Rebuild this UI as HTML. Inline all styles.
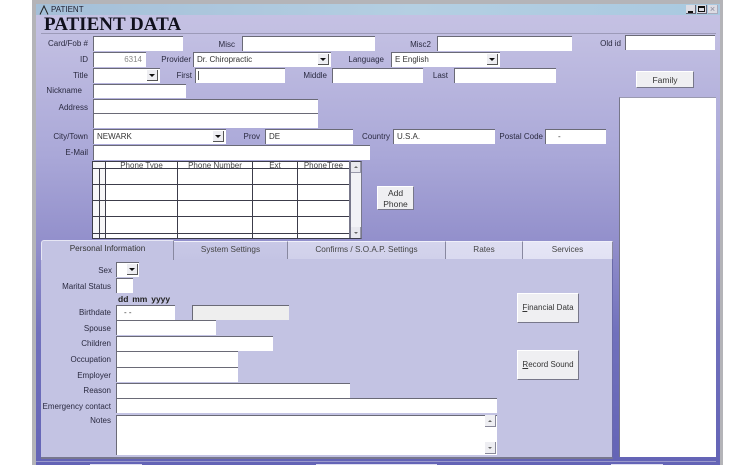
<!DOCTYPE html>
<html>
<head>
<meta charset="utf-8">
<style>
html,body{margin:0;padding:0;background:#fff;}
#p{position:relative;width:755px;height:465px;overflow:hidden;background:#fff;font-family:"Liberation Sans",sans-serif;font-size:8px;color:#2a2a40;filter:blur(.3px);}
#p div{position:absolute;box-sizing:border-box;}
.i{background:#fff;border-top:1px solid #6a6a76;border-left:1px solid #6a6a76;font-size:8px;color:#333;padding:0 0 0 3px;line-height:13px;white-space:nowrap;}
.l{text-align:right;white-space:nowrap;line-height:11px;height:11px;font-size:8px;}
.a{width:11px;height:11px;top:1px;right:2px;background:#eeeef2;border-right:1px solid #555;border-bottom:1px solid #555;}
.a:after{content:"";position:absolute;left:2px;top:4px;border-left:3px solid transparent;border-right:3px solid transparent;border-top:3px solid #111;}
.b{background:#efeff2;border-right:1px solid #77778a;border-bottom:1px solid #77778a;border-top:1px solid #fff;border-left:1px solid #fff;text-align:center;color:#333;font-size:8px;}
.t{border-right:1px solid #8888a0;border-top:1px solid #f0f0fa;font-size:8.2px;text-align:center;color:#444;line-height:16px;height:18px;top:241px;}
.h{background:#3c3c4a;height:1px;left:92px;width:258px;}
.v{background:#3c3c4a;width:1px;top:161px;height:77px;}
.c{top:161px;height:8px;line-height:9px;text-align:center;font-size:8px;color:#444;overflow:hidden;}
</style>
</head>
<body>
<div id="p">
<div style="left:32px;top:0;width:691px;height:465px;background:#b4b4b8;"></div>
<div style="left:36px;top:4px;width:684px;height:461px;background:linear-gradient(#c6c2e4 0px,#c2bfe2 30px,#aaa8d8 150px,#908dca 245px,#7070bc 330px,#6464b6 461px);"></div>
<div style="left:36px;top:4px;width:684px;height:11px;background:linear-gradient(90deg,#a4bfd8,#b4cfe2 55%,#a9c9e0);"></div>
<svg style="position:absolute;left:39px;top:5px" width="10" height="10"><path d="M1 9.5 L5 1 L9 9.5" fill="none" stroke="#222" stroke-width="1"/></svg>
<div style="left:51px;top:5px;font-size:8px;line-height:10px;color:#223;">PATIENT</div>
<div style="left:686px;top:5px;width:10px;height:9px;background:#dcdce4;border-right:1px solid #667;border-bottom:1px solid #667;"><div style="left:2px;top:6px;width:5px;height:2px;background:#111;"></div></div>
<div style="left:697px;top:5px;width:10px;height:9px;background:#dcdce4;border-right:1px solid #667;border-bottom:1px solid #667;"><div style="left:1px;top:1px;width:7px;height:6px;border:1px solid #111;border-top-width:2px;"></div></div>
<div style="left:708px;top:5px;width:10px;height:9px;background:#dcdce4;border-right:1px solid #aab;border-bottom:1px solid #aab;color:#889;font-size:9px;line-height:8px;text-align:center;">×</div>
<div style="left:44px;top:15px;font-family:'Liberation Serif',serif;font-weight:bold;font-size:19px;line-height:20px;color:#10101c;white-space:nowrap;">PATIENT DATA</div>
<div style="left:41px;top:33px;width:675px;height:1px;background:#9c9ab8;"></div>

<div class="l" style="left:30px;width:58px;top:38px;">Card/Fob #</div>
<div class="i" style="left:93px;top:36px;width:90px;height:15px;"></div>
<div class="l" style="left:200px;width:35px;top:39px;">Misc</div>
<div class="i" style="left:242px;top:36px;width:133px;height:15px;"></div>
<div class="l" style="left:400px;width:31px;top:39px;">Misc2</div>
<div class="i" style="left:437px;top:36px;width:135px;height:15px;"></div>
<div class="l" style="left:580px;width:41px;top:38px;">Old id</div>
<div class="i" style="left:625px;top:35px;width:90px;height:15px;"></div>

<div class="l" style="left:50px;width:38px;top:54px;">ID</div>
<div class="i" style="left:93px;top:52px;width:53px;height:15px;text-align:right;padding-right:4px;color:#888;">6314</div>
<div class="l" style="left:150px;width:41px;top:54px;">Provider</div>
<div class="i" style="left:193px;top:52px;width:138px;height:15px;">Dr. Chiropractic<div class="a"></div></div>
<div class="l" style="left:340px;width:44px;top:54px;">Language</div>
<div class="i" style="left:391px;top:52px;width:109px;height:15px;">E English<div class="a"></div></div>

<div class="l" style="left:50px;width:38px;top:70px;">Title</div>
<div class="i" style="left:93px;top:68px;width:67px;height:15px;"><div class="a"></div></div>
<div class="l" style="left:160px;width:32px;top:70px;">First</div>
<div class="i" style="left:195px;top:68px;width:90px;height:15px;"><div style="left:2px;top:2px;width:1px;height:9px;background:#555;"></div></div>
<div class="l" style="left:290px;width:37px;top:70px;">Middle</div>
<div class="i" style="left:332px;top:68px;width:91px;height:15px;"></div>
<div class="l" style="left:420px;width:28px;top:70px;">Last</div>
<div class="i" style="left:454px;top:68px;width:102px;height:15px;"></div>

<div class="l" style="left:40px;width:42px;top:85px;">Nickname</div>
<div class="i" style="left:93px;top:84px;width:93px;height:14px;"></div>
<div class="l" style="left:50px;width:38px;top:102px;">Address</div>
<div class="i" style="left:93px;top:99px;width:225px;height:14px;"></div>
<div class="i" style="left:93px;top:113px;width:225px;height:15px;"></div>
<div class="l" style="left:40px;width:48px;top:131px;">City/Town</div>
<div class="i" style="left:93px;top:129px;width:133px;height:15px;">NEWARK<div class="a"></div></div>
<div class="l" style="left:235px;width:25px;top:131px;">Prov</div>
<div class="i" style="left:265px;top:129px;width:88px;height:15px;">DE</div>
<div class="l" style="left:350px;width:40px;top:131px;">Country</div>
<div class="i" style="left:393px;top:129px;width:102px;height:15px;">U.S.A.</div>
<div class="l" style="left:490px;width:53px;top:131px;">Postal Code</div>
<div class="i" style="left:545px;top:129px;width:61px;height:15px;padding-left:12px;">-</div>
<div class="l" style="left:50px;width:38px;top:147px;">E-Mail</div>
<div class="i" style="left:93px;top:145px;width:277px;height:15px;"></div>

<div style="left:92px;top:161px;width:270px;height:78px;background:#fff;border:1px solid #3c3c4a;border-right:2px solid #77778a;"></div>
<div style="left:93px;top:162px;width:12px;height:76px;background:#f6f6f8;"></div>
<div class="h" style="top:168px;"></div><div class="h" style="top:184px;"></div><div class="h" style="top:200px;"></div><div class="h" style="top:216px;"></div><div class="h" style="top:233px;"></div>
<div class="v" style="left:99px;top:169px;height:69px;"></div><div class="v" style="left:105px;"></div><div class="v" style="left:177px;"></div><div class="v" style="left:252px;"></div><div class="v" style="left:297px;"></div><div class="v" style="left:349px;width:2px;background:#77778a;"></div>
<div class="c" style="left:106px;width:71px;">Phone Type</div>
<div class="c" style="left:178px;width:74px;">Phone Number</div>
<div class="c" style="left:253px;width:44px;">Ext</div>
<div class="c" style="left:298px;width:51px;">PhoneTree</div>
<div style="left:351px;top:162px;width:10px;height:76px;background:#f2f2f6;"></div>
<div style="left:351px;top:162px;width:10px;height:11px;background:#e8e8ee;border-bottom:1px solid #99a;border-right:1px solid #99a;"><div style="left:3px;top:4px;border-left:2px solid transparent;border-right:2px solid transparent;border-bottom:2px solid #666;"></div></div>
<div style="left:351px;top:227px;width:10px;height:11px;background:#e8e8ee;border-right:1px solid #99a;"><div style="left:3px;top:5px;border-left:2px solid transparent;border-right:2px solid transparent;border-top:2px solid #666;"></div></div>

<div class="b" style="left:377px;top:186px;width:37px;height:24px;line-height:10.5px;padding-top:1px;font-size:8.5px;">Add<br>Phone</div>
<div class="b" style="left:636px;top:71px;width:58px;height:17px;line-height:16px;font-size:8.5px;">Family</div>
<div style="left:619px;top:97px;width:97px;height:360px;background:#fff;border-left:1px solid #77778a;border-top:1px solid #9a9ab0;"></div>

<div style="left:41px;top:258px;width:572px;height:201px;background:#c3c3e3;border-right:1px solid #6a6aa8;border-bottom:2px solid #77778e;"></div>
<div style="left:36px;top:461px;width:680px;height:1px;background:#9a9acc;"></div>
<div style="left:90px;top:464px;width:52px;height:1px;background:#dcdcf0;"></div>
<div style="left:316px;top:464px;width:121px;height:1px;background:#dcdcf0;"></div>
<div style="left:611px;top:464px;width:52px;height:1px;background:#dcdcf0;"></div>
<div style="left:41px;top:240px;width:133px;height:20px;background:#c3c3e3;border-top:1px solid #e6e6f4;border-left:1px solid #e6e6f4;border-right:1px solid #8888a0;font-size:8.2px;text-align:center;color:#333;line-height:16px;border-top-left-radius:3px;">Personal Information</div>
<div class="t" style="left:174px;width:114px;background:linear-gradient(#c8c8e6,#c4c4e4);">System Settings</div>
<div class="t" style="left:288px;width:158px;background:linear-gradient(#d4d4ec,#d0d0ea);">Confirms / S.O.A.P. Settings</div>
<div class="t" style="left:446px;width:77px;background:linear-gradient(#dcdcf0,#dadaf0);">Rates</div>
<div class="t" style="left:523px;width:90px;background:linear-gradient(#e6e6f6,#e2e2f4);">Services</div>

<div class="l" style="left:60px;width:52px;top:265px;">Sex</div>
<div class="i" style="left:116px;top:262px;width:23px;height:15px;"><div class="a" style="right:1px;"></div></div>
<div class="l" style="left:40px;width:71px;top:281px;">Marital Status</div>
<div class="i" style="left:116px;top:278px;width:17px;height:15px;"></div>
<div style="left:118px;top:295px;font-weight:bold;font-size:8.5px;line-height:9px;color:#222;white-space:nowrap;word-spacing:1.5px;">dd mm yyyy</div>
<div class="l" style="left:50px;width:61px;top:307px;">Birthdate</div>
<div class="i" style="left:116px;top:305px;width:59px;height:15px;padding-left:7px;">- -</div>
<div class="i" style="left:192px;top:305px;width:97px;height:15px;background:#eeeeee;"></div>
<div class="l" style="left:50px;width:61px;top:323px;">Spouse</div>
<div class="i" style="left:116px;top:320px;width:100px;height:15px;"></div>
<div class="l" style="left:50px;width:61px;top:338px;">Children</div>
<div class="i" style="left:116px;top:336px;width:157px;height:15px;"></div>
<div class="l" style="left:50px;width:61px;top:354px;">Occupation</div>
<div class="i" style="left:116px;top:351px;width:122px;height:16px;"></div>
<div class="l" style="left:50px;width:61px;top:370px;">Employer</div>
<div class="i" style="left:116px;top:367px;width:122px;height:15px;"></div>
<div class="l" style="left:50px;width:61px;top:385px;">Reason</div>
<div class="i" style="left:116px;top:383px;width:234px;height:15px;"></div>
<div class="l" style="left:40px;width:71px;top:401px;">Emergency contact</div>
<div class="i" style="left:116px;top:398px;width:381px;height:15px;"></div>
<div class="l" style="left:50px;width:61px;top:415px;">Notes</div>
<div class="i" style="left:116px;top:415px;width:381px;height:40px;"></div>
<div style="left:485px;top:415px;width:11px;height:12px;background:#eeeef2;border-right:1px solid #889;border-bottom:1px solid #889;"><div style="left:3px;top:5px;border-left:2px solid transparent;border-right:2px solid transparent;border-bottom:2px solid #666;"></div></div>
<div style="left:485px;top:442px;width:11px;height:12px;background:#eeeef2;border-right:1px solid #889;border-bottom:1px solid #889;"><div style="left:3px;top:5px;border-left:2px solid transparent;border-right:2px solid transparent;border-top:2px solid #666;"></div></div>

<div class="b" style="left:517px;top:293px;width:62px;height:30px;line-height:28px;"><u>F</u>inancial Data</div>
<div class="b" style="left:517px;top:350px;width:62px;height:30px;line-height:28px;"><u>R</u>ecord Sound</div>
</div>
</body>
</html>
